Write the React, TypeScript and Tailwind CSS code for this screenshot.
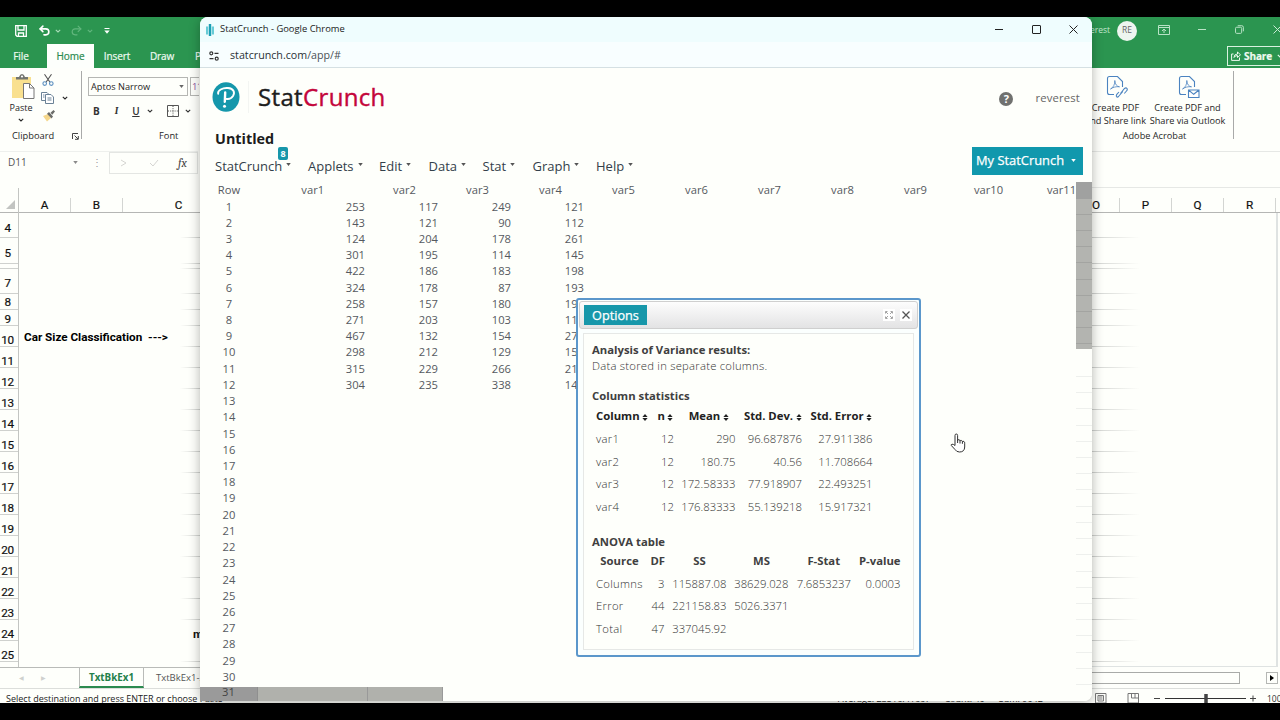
import { Undo2, Redo2 } from "lucide-react";

const sheetRows = [
  { n: "4", h: "h-[25px]", pad: "pt-[7px]" },
  { n: "5", h: "h-[26px]", pad: "pt-[7px]" },
  { n: "", h: "h-[5px]", pad: "" },
  { n: "7", h: "h-[25px]", pad: "pt-[6px]" },
  { n: "8", h: "h-[16px]", pad: "pt-[2px]" },
  { n: "9", h: "h-[16px]", pad: "pt-[4px]" },
  { n: "10", h: "h-[21px]", pad: "pt-[9px]" },
  ...Array.from({ length: 15 }, (_, i) => ({
    n: String(i + 11),
    h: "h-[21px]",
    pad: "pt-[10px]",
  })),
];

const menus = [
  { label: "StatCrunch", w: "w-[93px]" },
  { label: "Applets", w: "w-[71px]" },
  { label: "Edit", w: "w-[49.5px]" },
  { label: "Data", w: "w-[54px]" },
  { label: "Stat", w: "w-[50px]" },
  { label: "Graph", w: "w-[63.5px]" },
  { label: "Help", w: "w-[60px]" },
];

const data = [
  [253, 117, 249, 121],
  [143, 121, 90, 112],
  [124, 204, 178, 261],
  [301, 195, 114, 145],
  [422, 186, 183, 198],
  [324, 178, 87, 193],
  [258, 157, 180, 195],
  [271, 203, 103, 110],
  [467, 132, 154, 278],
  [298, 212, 129, 158],
  [315, 229, 266, 213],
  [304, 235, 338, 149],
];

const columnStats = [
  ["var1", "12", "290", "96.687876", "27.911386"],
  ["var2", "12", "180.75", "40.56", "11.708664"],
  ["var3", "12", "172.58333", "77.918907", "22.493251"],
  ["var4", "12", "176.83333", "55.139218", "15.917321"],
];

const anova = [
  ["Columns", "3", "115887.08", "38629.028", "7.6853237", "0.0003"],
  ["Error", "44", "221158.83", "5026.3371", "", ""],
  ["Total", "47", "337045.92", "", "", ""],
];

function Chevron({ className = "" }: { className?: string }) {
  return (
    <svg viewBox="0 0 6 4" className={`h-1 w-1.5 shrink-0 ${className}`} fill="none" stroke="currentColor" strokeWidth="1.1">
      <path d="M0.8 0.8L3 3L5.2 0.8" />
    </svg>
  );
}

function Caret({ className = "" }: { className?: string }) {
  return (
    <svg viewBox="0 0 6 4" className={`h-[3px] w-[5px] shrink-0 ${className}`} fill="currentColor">
      <path d="M0 0H6L3 4Z" />
    </svg>
  );
}

function PdfIcon({ kind }: { kind: "link" | "mail" }) {
  return (
    <svg viewBox="0 0 22 24" className="h-6 w-[22px]" fill="none" stroke="#4b83c0" strokeWidth="1.1">
      <path d="M8 19.5H3.5Q1.5 19.5 1.5 17.5V3.5Q1.5 1.5 3.5 1.5H11.5L16.5 6.5V12" />
      <path d="M4.5 14C7.5 12.5 9 9 8.8 5.5C9 9.5 11 11.5 13.5 11.8C10 11.3 7 12.3 4.5 14Z" strokeWidth="0.8" />
      {kind === "mail" ? (
        <path d="M10.5 15H21V22.5H10.5ZM10.5 15L15.7 19.3L21 15" fill="#fff" />
      ) : (
        <path d="M14.5 18.5L18.5 13.5Q20 12.3 21 13.5Q21.7 14.7 20.5 16L18.3 18.5M16.8 16.5L12.5 21.5Q11.3 22.7 10.5 21.5Q10 20.5 11 19.2L13 17" />
      )}
    </svg>
  );
}

function ExcelTitle() {
  return (
    <div className="flex h-[27px] items-center justify-between text-white">
      <div className="flex items-center pl-[15px]">
        <svg viewBox="0 0 12 12" className="h-3 w-3" fill="none" stroke="currentColor" strokeWidth="1.3">
          <path d="M.7.7H11.3V11.3H2L.7 10ZM3 .7V5H9V.7M3.5 11V8H8.5V11" />
        </svg>
        <Undo2 className="ml-[11px] h-[13px] w-[13px]" strokeWidth={3} />
        <Chevron className="ml-1 text-[#a9dbb8]" />
        <Redo2 className="ml-[9px] h-[13px] w-[13px] text-[#61b67d]" strokeWidth={2.2} />
        <Chevron className="ml-1 text-[#61b67d]" />
        <svg viewBox="0 0 6 6" className="ml-[11px] h-1.5 w-1.5" fill="currentColor">
          <path d="M.5 0H5.5V1H.5ZM.3 2.5H5.7L3 5.7Z" />
        </svg>
      </div>
      <div className="flex w-[188px] items-center overflow-hidden pb-0.5">
        <span className="flex w-[18px] justify-end pt-0.5 text-[8.5px] text-[#c5e8d0]">reverest</span>
        <span className="mt-0.5 ml-[7px] flex h-5 w-5 shrink-0 items-center justify-center rounded-full bg-[#eef5f0] text-[8.5px] text-[#666]">RE</span>
        <svg viewBox="0 0 12 10" className="ml-[21px] h-2.5 w-3 shrink-0 text-[#b9e3c6]" fill="none" stroke="currentColor">
          <path d="M.5.5H11.5V9.5H.5ZM.5 2.5H11.5M6 8V4M4 6L6 4L8 6" />
        </svg>
        <span className="ml-7 h-px w-2 shrink-0 bg-[#b9e3c6]" />
        <svg viewBox="0 0 10 10" className="ml-[29px] h-[9px] w-[9px] shrink-0 text-[#b9e3c6]" fill="none" stroke="currentColor" strokeWidth="1.1">
          <rect x=".6" y="2.5" width="6.8" height="6.8" rx="1.2" />
          <path d="M3 .8H7.5Q9.3.8 9.3 2.6V7" />
        </svg>
        <svg viewBox="0 0 9 9" className="ml-[29px] h-[9px] w-[9px] shrink-0 text-[#c9ebd4]" stroke="currentColor">
          <path d="M.5.5L8.5 8.5M8.5.5L.5 8.5" />
        </svg>
      </div>
    </div>
  );
}

function ExcelTabs() {
  return (
    <div className="flex h-6 justify-between text-[10px] font-medium tracking-[-0.1px] text-[#eefaf1] [-webkit-text-stroke:0.2px]">
      <div className="flex text-center leading-6">
        <span className="w-[42px]">File</span>
        <span className="ml-[5px] w-[47px] bg-[#fdfffc] text-[#2a8a50]">Home</span>
        <span className="w-[46px]">Insert</span>
        <span className="w-[44px]">Draw</span>
        <span className="ml-[11px]">Page</span>
      </div>
      <div className="mt-0.5 flex h-5 w-[53px] shrink-0 items-center overflow-hidden border border-r-0 border-[#d9f2e0] pl-[3px] text-[10px] font-bold">
        <svg viewBox="0 0 10 10" className="mr-[3px] h-2.5 w-2.5 shrink-0" fill="none" stroke="currentColor">
          <path d="M2.5 3H.6V9.4H8.5V6.5M3 6.5Q3 3 6.5 3V1L9.5 3.8L6.5 6.5V4.5Q4 4.5 3 6.5Z" />
        </svg>
        Share
        <Chevron className="ml-[5px]" />
      </div>
    </div>
  );
}

function Ribbon() {
  return (
    <div className="flex h-[83px] justify-between text-[9px] text-[#262626]">
      <div className="flex">
        <div className="w-[81px]">
          <div className="flex h-[61px]">
            <div className="flex w-[42px] flex-col items-center pt-1.5 text-[9px] leading-[13px]">
              <svg viewBox="0 0 24 26" className="ml-[3px] h-[26px] w-6">
                <rect x="1" y="3" width="19" height="21" fill="#f9e08f" />
                <path d="M5 5.5V3H8Q9 0 11 0T14 3H17V5.5Z" fill="#73756f" />
                <circle cx="11" cy="2.5" r="1.1" fill="#fff" />
                <path d="M12.5 9.5H18.5L23 14V24.5H12.5Z" fill="#fff" stroke="#777" />
                <path d="M18.5 9.5V14H23" fill="none" stroke="#777" />
              </svg>
              <span className="mt-[1px]">Paste</span>
              <Chevron className="mt-[4px]" />
            </div>
            <div className="-ml-px flex w-[13px] flex-col items-center gap-[6px] pt-[6px]">
              <svg viewBox="0 0 12 12" className="h-3 w-3" fill="none" strokeWidth="1.1">
                <path d="M2.5.3L8 8.3M9.5.3L4 8.3" stroke="#555" />
                <circle cx="2.7" cy="9.6" r="1.8" stroke="#5b8fc0" />
                <circle cx="9.3" cy="9.6" r="1.8" stroke="#5b8fc0" />
              </svg>
              <svg viewBox="0 0 13 12" className="h-3 w-[13px]" fill="#fff" stroke="#6b8296">
                <path d="M4.5 8.5H.5V.5H6L8 2.5" />
                <path d="M4.5 2.5H10L12.5 5V11.5H4.5ZM6.5 6H10.5M6.5 8H10.5M2 3H3.5M2 5H3.5" />
              </svg>
              <svg viewBox="0 0 13 12" className="ml-0.5 h-3 w-[13px]">
                <path d="M1 6L6 4L9 8L5 11.5Z" fill="#f5d78b" />
                <path d="M5 3.8L7 2L11 6.5L9.5 8.5ZM8.5 2.8L11.5 0L13 1.5L10.3 4.7Z" fill="#6b6c69" />
              </svg>
            </div>
            <Chevron className="mt-[28px] ml-[8px]" />
          </div>
          <div className="flex items-center pl-[12px] text-[9.3px] leading-[14px]">
            Clipboard
            <svg viewBox="0 0 7 7" className="ml-[18px] h-[7px] w-[7px] shrink-0" fill="none" stroke="#444">
              <path d="M.5 6V.5H6M2.5 2.5L6 6M6.3 3V6.3H3" />
            </svg>
          </div>
        </div>
        <div className="mt-[3px] h-[68px] w-px bg-[#a9aaa9]" />
        <div className="w-[117px] overflow-hidden pt-[9px] pl-1.5">
          <div className="flex w-36 gap-[2px]">
            <div className="flex h-[19px] w-[100px] items-center justify-between border border-[#b5b6b3] pr-[3px] pl-[2px] text-[9.2px]">
              Aptos Narrow
              <Caret className="text-[#666]" />
            </div>
            <div className="h-[19px] w-9 border border-[#b5b6b3] pl-px text-[9.5px] leading-[17px] tracking-[-0.4px] text-[#8b4e9c]">11</div>
          </div>
          <div className="mt-[7px] flex h-4 items-center pl-[5px] text-[10px] text-[#333]">
            <b>B</b>
            <i className="ml-[15px] font-serif font-semibold">I</i>
            <u className="ml-[14px] font-semibold">U</u>
            <Chevron className="ml-[7px]" />
            <svg viewBox="0 0 12 12" className="ml-[14px] h-3 w-3" fill="none" stroke="#555">
              <path d="M.5.5H11.5V11.5H.5Z" />
              <path d="M6 1V11M1 6H11" strokeDasharray="1 1.2" />
            </svg>
            <Chevron className="ml-[6px]" />
          </div>
          <div className="mt-[10px] pl-[71px] text-[9.3px] leading-[14px]">Font</div>
        </div>
      </div>
      <div className="flex w-[188px]">
        <div className="w-[141px] text-[9.2px]">
          <div className="flex justify-end text-center leading-[13px]">
            <div className="flex w-[61px] shrink-0 flex-col items-center pt-[7px]">
              <span className="ml-[3px]">
                <PdfIcon kind="link" />
              </span>
              <span className="mt-[2px] flex flex-col items-center whitespace-nowrap">
                <span>Create PDF</span>
                <span>and Share link</span>
              </span>
            </div>
            <div className="flex w-[87px] shrink-0 flex-col items-center pt-[7px] pr-[4px]">
              <span className="ml-[3px]">
                <PdfIcon kind="mail" />
              </span>
              <span className="mt-[2px] whitespace-nowrap">Create PDF and<br />Share via Outlook</span>
            </div>
          </div>
          <div className="mt-[2px] pr-[16px] text-center leading-[14px]">Adobe Acrobat</div>
        </div>
        <div className="mt-[3px] h-[68px] w-px bg-[#a9aaa9]" />
      </div>
    </div>
  );
}

function FormulaBar() {
  return (
    <div className="flex h-[37px] justify-between">
      <div className="flex h-[22px] w-[198px] items-center border-t border-[#eef0ed] text-[10px] text-[#555]">
        <div className="flex w-[84px] items-center justify-between pr-[6px] pl-2">
          D11
          <Caret className="text-[#8a8a8a]" />
        </div>
        <span className="ml-[8px] w-[17px] text-[#999]">⋮</span>
        <div className="flex h-[22px] flex-1 items-center border border-[#e4e6e3]">
          <svg viewBox="0 0 42 8" className="ml-[11px] h-2 w-[42px]" fill="none" stroke="#d5d5d2">
            <path d="M0 1L5 4L0 7M29 4L32 7L37 1" />
          </svg>
          <i className="ml-[15px] font-serif text-[12px] text-[#444]">fx</i>
        </div>
      </div>
      <div className="w-[188px] border-t border-b border-[#e6e8e5]" />
    </div>
  );
}

function Sheet() {
  return (
    <div className="flex h-[479px] overflow-hidden font-[Roboto] text-[11.7px] text-[#111]">
      <div className="w-[19px] shrink-0 border-r border-[#c3c5c2] [-webkit-text-stroke:0.2px]">
        <div className="flex h-[25px] items-end justify-end border-b border-[#b5b6b4] pr-[3px] pb-[3px]">
          <svg viewBox="0 0 10 10" className="h-[9px] w-[9px]" fill="#c2c4c1">
            <path d="M10 0V10H0Z" />
          </svg>
        </div>
        {sheetRows.map((r, i) => (
          <div key={i} className={`flex items-center justify-center border-b border-[#cfd1ce] pr-[3px] tracking-[-0.4px] ${r.h} ${r.pad}`}>
            {r.n}
          </div>
        ))}
      </div>
      <div className="w-[181px] shrink-0 overflow-hidden">
        <div className="flex h-[25px] border-b border-[#b5b6b4] pt-[10px] text-center leading-[15px] [-webkit-text-stroke:0.2px]">
          <span className="w-[52px] shrink-0 border-r border-[#d3d5d2]">A</span>
          <span className="w-[52px] shrink-0 border-r border-[#d3d5d2]">B</span>
          <span className="w-[111px] shrink-0">C</span>
        </div>
        {sheetRows.map((r, i) => (
          <div key={i} className={`flex items-end justify-end ${r.h}`}>
            {r.n === "10" && (
              <b className="mr-auto pl-[5px] text-[11.7px] leading-[20px] font-bold whitespace-pre text-black">{"Car Size Classification  --->"}</b>
            )}
            {r.n === "24" ? (
              <b className="w-[7px] leading-[13px]">mean</b>
            ) : (
              <span className="h-px w-5 shrink-0 bg-linear-to-l from-[#cfd1ce] to-transparent" />
            )}
          </div>
        ))}
      </div>
      <div className="ml-auto w-[188px] shrink-0">
        <div className="flex h-[25px] border-b border-[#b5b6b4] pt-[10px] text-center leading-[15px] [-webkit-text-stroke:0.2px]">
          <span className="w-7 border-r border-[#d3d5d2] pr-[24px]">O</span>
          <span className="w-[52px] border-r border-[#d3d5d2]">P</span>
          <span className="w-[52px] border-r border-[#d3d5d2]">Q</span>
          <span className="w-[52px] border-r border-[#d3d5d2]">R</span>
        </div>
        <div className="mr-[2px] h-[454px] border-r-2 border-b border-[#dfe3e2]">
          {sheetRows.map((r, i) => (
            <div key={i} className={`flex items-end ${r.h}`}>
              <span className="h-px w-12 bg-linear-to-r from-[#cfd1ce] to-transparent" />
            </div>
          ))}
        </div>
      </div>
    </div>
  );
}

function ExcelFooter() {
  return (
    <>
      <div className="flex h-[22px] justify-between border-b border-[#dcdedb]">
        <div className="flex w-[200px] overflow-hidden border-t border-[#b9bbb8] text-[10px] whitespace-nowrap">
          <div className="flex w-[79px] shrink-0 items-center gap-[17px] pl-[19px] text-[6px] text-[#cfd1ce]">
            <span>◀</span>
            <span>▶</span>
          </div>
          <div className="h-5 w-[65px] shrink-0 border-x border-b-2 border-x-[#b9bbb8] border-b-[#2b8a4f] text-center text-[9.8px] leading-[20px] font-bold text-[#23804a]">
            TxtBkEx1
          </div>
          <span className="shrink-0 pl-[12px] text-[9.5px] leading-[20px] text-[#555]">TxtBkEx1-2</span>
        </div>
        <div className="flex w-[188px] items-center justify-between pr-0.5">
          <div className="h-3 w-[148px] border border-l-0 border-[#a9aba8]" />
          <div className="flex h-3 w-3 items-center justify-center border border-[#b5b7b4]">
            <svg viewBox="0 0 4 6" className="h-1.5 w-1">
              <path d="M0 0L4 3L0 6Z" />
            </svg>
          </div>
        </div>
      </div>
      <div className="flex h-[14px] items-center overflow-hidden text-[9px] leading-[14px] whitespace-nowrap text-[#222]">
        <span className="w-[831px] pt-[6px] pl-[6px]">Select destination and press ENTER or choose Paste</span>
        <span className="w-[261px] pt-[6px] pl-[7px] whitespace-pre">Average: 23516.41667      Count: 40      Sum: 9042</span>
        <div className="flex items-center pt-[3px]">
          <svg viewBox="0 0 188 12" className="h-3 w-[188px]" fill="none" stroke="#777">
            <path d="M3.5 1.5H14V11H3.5ZM6 3.5H11.5V9H6ZM7 5H10.5M7 7H10.5" />
            <path d="M36 1.5H46.5V11H36ZM39.5 1.5V6H46M43 1.5V6" />
            <path d="M62 6.5H68M158 6.5H164M161 3.5V9.5" stroke="#444" />
            <path d="M73 6.5H154" stroke="#333" />
            <path d="M114 2V11" stroke="#444" strokeWidth="3.5" />
            <text x="175" y="10" fontSize="8.5" fill="#333" stroke="none">100%</text>
          </svg>
        </div>
      </div>
    </>
  );
}

function ExcelWindow() {
  return (
    <div className="absolute top-[17px] left-0 h-[686px] w-[1280px] overflow-hidden bg-[#fefffb]">
      <div className="bg-[#2b9550]">
        <ExcelTitle />
        <ExcelTabs />
      </div>
      <Ribbon />
      <FormulaBar />
      <Sheet />
      <ExcelFooter />
    </div>
  );
}

function SortArrows() {
  return (
    <svg viewBox="0 0 6 8" className="ml-[2.5px] inline-block h-[7px] w-[6px]" fill="currentColor">
      <path d="M0 3.3L3 0L6 3.3ZM0 4.7L3 8L6 4.7Z" />
    </svg>
  );
}

function ResultsDialog() {
  return (
    <div className="absolute top-[281px] left-[376px] h-[359px] w-[345px] rounded-[3px] border-2 border-[#5b97cb] bg-[#fbfffe] p-px text-[11.3px] text-[#333]">
      <div className="flex h-[28px] items-center rounded-[3px] border border-[#cfcfcf] bg-linear-to-b from-[#fdfdfd] to-[#e3e3e4] pr-[5px] pl-1">
        <span className="h-5 w-[63px] bg-[#1797aa] text-center text-[12.7px] leading-[20px] font-medium text-white [-webkit-text-stroke:0.25px]">Options</span>
        <span className="ml-auto flex h-3 w-3 items-center justify-center bg-white">
          <svg viewBox="0 0 8 8" className="h-2 w-2" fill="none" stroke="#999" strokeWidth="0.9">
            <path d="M.5 2.5V.5H2.5M5.5.5H7.5V2.5M7.5 5.5V7.5H5.5M2.5 7.5H.5V5.5M1 1L3 3M7 1L5 3M7 7L5 5M1 7L3 5" />
          </svg>
        </span>
        <span className="ml-[5px] flex h-3 w-3 items-center justify-center bg-white">
          <svg viewBox="0 0 8 8" className="h-2 w-2" stroke="#555" strokeWidth="1.3">
            <path d="M.5.5L7.5 7.5M7.5.5L.5 7.5" />
          </svg>
        </span>
      </div>
      <div className="mx-[4px] mt-[4px] h-[317px] border border-[#e6e8e6] bg-[#fefffb] px-[8px] pt-[8px]">
        <div className="leading-[16px] font-bold text-[#404040]">Analysis of Variance results:</div>
        <div className="leading-[16px] font-light tracking-[0.23px]">Data stored in separate columns.</div>
        <div className="mt-[14px] leading-[16px] font-bold text-[#404040]">Column statistics</div>
        <table className="mt-px w-[284.5px] table-fixed font-light whitespace-nowrap">
          <thead className="text-[#222]">
            <tr className="h-[23px] font-bold">
              <td className="w-[61px] pl-1">Column<SortArrows /></td>
              <td className="w-[25px] text-center">n<SortArrows /></td>
              <td className="w-[61.5px] text-center">Mean<SortArrows /></td>
              <td className="w-[66.5px] text-center">Std. Dev.<SortArrows /></td>
              <td className="text-center">Std. Error<SortArrows /></td>
            </tr>
          </thead>
          <tbody>
            {columnStats.map((row) => (
              <tr key={row[0]} className="h-[22.7px]">
                {row.map((v, i) => (
                  <td key={i} className={i === 0 ? "pl-1 tracking-[0.3px]" : "pr-1 text-right"}>{v}</td>
                ))}
              </tr>
            ))}
          </tbody>
        </table>
        <div className="mt-[15px] leading-[16px] font-bold text-[#404040]">ANOVA table</div>
        <table className="w-[312.5px] table-fixed font-light whitespace-nowrap">
          <thead className="text-[#404040]">
            <tr className="h-[23px] text-center font-bold">
              <td className="w-[55px]">Source</td>
              <td className="w-[21.5px]">DF</td>
              <td className="w-[62px]">SS</td>
              <td className="w-[62px]">MS</td>
              <td className="w-[62.5px]">F-Stat</td>
              <td>P-value</td>
            </tr>
          </thead>
          <tbody>
            {anova.map((row) => (
              <tr key={row[0]} className="h-[22.7px]">
                {row.map((v, i) => (
                  <td key={i} className={i === 0 ? "pl-1 tracking-[0.3px]" : "pr-1 text-right"}>{v}</td>
                ))}
              </tr>
            ))}
          </tbody>
        </table>
      </div>
    </div>
  );
}

function DataGrid() {
  return (
    <div className="h-[519px] overflow-hidden text-[11.2px] text-[#555960]">
      <div className="flex h-[16.5px] leading-[16.5px]">
        <span className="w-[58px] shrink-0 text-center">Row</span>
        <span className="w-[109.5px] shrink-0 text-center">var1</span>
        <div className="flex w-[708.5px] overflow-hidden">
          {Array.from({ length: 10 }, (_, i) => (
            <span key={i} className="w-[73px] shrink-0 pl-px text-center">var{i + 2}</span>
          ))}
        </div>
        <span className="w-4 shrink-0 bg-[#a0a1a0]" />
      </div>
      {Array.from({ length: 30 }, (_, r) => (
        <div key={r} className="flex h-[16.23px] leading-[16.8px]">
          <span className="w-[58px] text-center">{r + 1}</span>
          {(data[r] ?? []).map((v, i) => (
            <span key={i} className={i === 0 ? "w-[109.5px] pr-[2.5px] text-right" : "w-[73px] pr-[2.5px] text-right"}>
              {v}
            </span>
          ))}
          <span
            className={
              r < 9
                ? "ml-auto w-4 border-b border-[#a3a4a1] bg-[#b3b4b0]"
                : r === 9
                  ? "ml-auto h-[5px] w-4 bg-[#b3b4b0]"
                  : "ml-auto w-4 border-b border-[#eef0ed]"
            }
          />
        </div>
      ))}
      <div className="mt-[2.3px] flex h-[13.5px] leading-[10px]">
        <span className="w-[58px] border-r border-[#8f8f8f] bg-[#9a9a9a] text-center text-[#444]">31</span>
        <span className="w-[110px] border-r border-[#999] bg-[#b0b1ac]" />
        <span className="w-[75px] border-r border-[#999] bg-[#b0b1ac]" />
      </div>
    </div>
  );
}

function ChromeWindow() {
  return (
    <div className="absolute top-[17px] left-[200px] h-[684px] w-[892px] rounded-lg shadow-[0_2px_12px_rgba(0,0,0,0.3)]">
      <div className="h-full overflow-hidden rounded-t-lg rounded-br-lg bg-[#fefffb]">
        <div className="flex h-[25px] items-center bg-[#effdfe] pl-1.5 text-[9.4px] text-[#222]">
          <svg viewBox="0 0 8 12" className="mr-1.5 h-3 w-2">
            <path d="M0 2.5H2.2V10.5H0ZM5.8 2.5H8V10.5H5.8Z" fill="#67cbd6" />
            <path d="M2.8 0H5.2V12H2.8Z" fill="#1a9fb4" />
          </svg>
          StatCrunch - Google Chrome
          <span className="ml-auto h-px w-2 bg-[#222]" />
          <span className="ml-[29px] h-[9px] w-[9px] rounded-[1px] border border-[#222]" />
          <svg viewBox="0 0 9 9" className="mr-[14.5px] ml-[28px] h-[9px] w-[9px]" stroke="#222">
            <path d="M.5.5L8.5 8.5M8.5.5L.5 8.5" />
          </svg>
        </div>
        <div className="flex h-[26px] items-center border-b border-[#d5e0e3] bg-[#f8feff] pt-[2px] pl-[9px] text-[10.7px] text-[#4a5055]">
          <svg viewBox="0 0 10 10" className="mr-[11px] h-2.5 w-2.5" fill="none" stroke="#333" strokeWidth="1.2">
            <circle cx="2.3" cy="2.3" r="1.5" />
            <circle cx="7.7" cy="7.7" r="1.5" />
            <path d="M5.5 2.3H9.5M.5 7.7H4.5" />
          </svg>
          <span>
            <span className="text-[#2b3136]">statcrunch.com</span>/app/#
          </span>
        </div>
        <div className="flex h-[58px] items-center pl-3">
          <svg viewBox="0 0 28 30" className="h-[30px] w-7">
            <ellipse cx="14" cy="15" rx="13.5" ry="14.8" fill="#1597ab" />
            <g fill="none" stroke="#fff" strokeLinecap="round">
              <path d="M6.2 11.8C5.2 8.5 10.5 5.5 16 6C21.5 6.5 23.3 10.2 21 14C19.5 16.3 16.5 17.4 14 16.8" strokeWidth="1.9" />
              <path d="M13.2 10.5L12.8 19.8" strokeWidth="2.4" />
            </g>
            <circle cx="12.5" cy="24.3" r="1.5" fill="#fff" />
          </svg>
          <span className="ml-2 h-8 w-px bg-[#f3f5f2]" />
          <span className="ml-[9px] text-[24px] leading-8 font-medium tracking-[0.35px] text-[#1e1e1e] [-webkit-text-stroke:0.4px]">
            Stat<span className="text-[#c4063b]">Crunch</span>
          </span>
          <span className="mt-[3px] ml-auto flex h-[14px] w-[14px] items-center justify-center rounded-full bg-[#70716f] text-[11px] leading-none font-bold text-white">?</span>
          <span className="mt-[2px] mr-[12px] ml-[22px] text-[11.3px] tracking-[0.15px] text-[#666]">reverest</span>
        </div>
        <div className="flex h-[56px] justify-between pr-[9px] pl-[15px]">
          <div>
            <div className="pt-[3px] text-[14.4px] leading-[20px] font-bold text-[#1c1c1c]">Untitled</div>
            <div className="mt-[8px] flex text-[13px] leading-[19px] text-[#33404a]">
              {menus.map((m) => (
                <div key={m.label} className={`relative flex items-center ${m.w}`}>
                  {m.label}
                  <Caret className="mb-1 ml-[4px] text-[#555]" />
                  {m.label === "StatCrunch" && (
                    <span className="absolute top-[-10px] left-[63px] flex h-[13px] w-[10px] items-center justify-center rounded-[2px] bg-[#1797aa] text-[9px] leading-none font-bold text-white">8</span>
                  )}
                </div>
              ))}
            </div>
          </div>
          <div className="mt-[21px] flex h-[27.5px] w-[111px] items-center justify-between bg-[#1198ad] pr-[7px] pl-[4px] text-[12.9px] font-medium text-white [-webkit-text-stroke:0.25px]">
            My StatCrunch
            <Caret />
          </div>
        </div>
        <DataGrid />
      </div>
      <ResultsDialog />
    </div>
  );
}

export default function App() {
  return (
    <div className="relative h-[720px] w-[1280px] overflow-hidden bg-black font-['Open_Sans',sans-serif]">
      <ExcelWindow />
      <ChromeWindow />
      <svg viewBox="0 0 16 20" className="absolute top-[433px] left-[950px] h-5 w-4" fill="#fff" stroke="#333" strokeLinejoin="round">
        <path d="M5 12.5V2.5Q5 1 6.3 1T7.6 2.5V7.5Q8 6.3 9 6.7Q10 6.9 10 8Q10.6 7 11.6 7.5Q12.4 7.8 12.4 8.7Q13 8 14 8.5Q14.8 9 14.7 10.2V14Q14.5 19 9.5 19Q6.5 19 5 16.5L1.3 12.5Q.9 11.5 2 11.2Q3.3 11 5 12.5Z" />
        <path d="M7.6 7V10M10 8V10.5M12.4 8.7V10.8" />
      </svg>
    </div>
  );
}
